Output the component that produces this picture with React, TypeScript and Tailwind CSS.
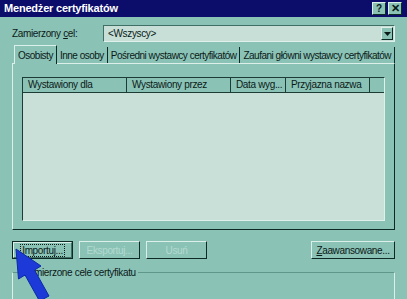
export default function App() {
  const font = { fontFamily: '"Liberation Sans", Arial, sans-serif' };
  const raised = "border border-t-[#dcefe9] border-l-[#dcefe9] border-r-[#0d2a24] border-b-[#0d2a24]";
  return (
    <div
      className="relative w-[407px] h-[299px] overflow-hidden bg-[#8ac2b6] text-[10px] tracking-[-0.35px] text-[#0a1a16] whitespace-nowrap"
      style={font}
    >
      {/* title bar */}
      <div className="flex h-[17px] items-center justify-between bg-[#0c0c6a] pl-[4px] pr-[5px]">
        <span className="font-bold text-[11px] text-white tracking-[-0.2px]">Menedżer certyfikatów</span>
        <div className="flex gap-[2px]">
          <div className={`flex h-[13px] w-[14px] items-center justify-center bg-[#8ac2b6] text-[10px] font-bold leading-none ${raised}`}>
            ?
          </div>
          <div className={`flex h-[13px] w-[14px] items-center justify-center bg-[#8ac2b6] text-[11px] font-bold leading-none ${raised}`}>
            ✕
          </div>
        </div>
      </div>

      <div className="px-[12px] pt-[8px]">
        {/* target row */}
        <div className="flex items-center">
          <span className="w-[91px]">
            Zamierzony <span className="underline">c</span>el:
          </span>
          <div className="flex h-[17px] flex-1 items-center border border-t-[#3f6f65] border-l-[#3f6f65] border-r-[#e0f0ea] border-b-[#e0f0ea] bg-[#c8dfd8] pl-[4px] pr-[1px]">
            <span className="flex-1">&lt;Wszyscy&gt;</span>
            <div className={`flex h-[13px] w-[12px] items-center justify-center bg-[#8ac2b6] ${raised}`}>
              <svg width="7" height="4" viewBox="0 0 7 4">
                <path d="M0 0h7L3.5 4z" fill="#0a1a16" />
              </svg>
            </div>
          </div>
        </div>

        {/* tabs */}
        <div className="mt-[5px] flex h-[16px] items-end pl-[2px] tracking-[-0.5px]">
          <div className="relative z-10 -mb-px flex h-[19px] items-center border border-b-0 border-t-[#dcefe9] border-l-[#dcefe9] border-r-[#0d2a24] bg-[#8ac2b6] px-[3px]">
            Osobisty
          </div>
          <div className="flex h-[16px] items-center border-r border-[#0d2a24] px-[3px]">Inne osoby</div>
          <div className="flex h-[16px] items-center border-r border-[#0d2a24] px-[3px]">Pośredni wystawcy certyfikatów</div>
          <div className="flex h-[16px] items-center border-r border-[#0d2a24] px-[3px]">Zaufani główni wystawcy certyfikatów</div>
        </div>

        {/* tab panel */}
        <div className={`h-[167px] px-[9px] pt-[13px] ${raised}`}>
          <div className="h-[144px] border border-t-[#1d3c35] border-l-[#1d3c35] border-r-[#e0f0ea] border-b-[#e0f0ea] bg-[#c9e0d9]">
            <div className="flex h-[15px] border-b border-[#1d3c35] bg-[#8ac2b6] leading-[14px]">
              <div className="w-[104px] overflow-hidden border-r border-[#1d3c35] pl-[5px]">Wystawiony dla</div>
              <div className="w-[104px] overflow-hidden border-r border-[#1d3c35] pl-[5px]">Wystawiony przez</div>
              <div className="w-[55px] overflow-hidden border-r border-[#1d3c35] pl-[5px]">Data wyg...</div>
              <div className="w-[84px] overflow-hidden border-r border-[#1d3c35] pl-[5px]">Przyjazna nazwa</div>
              <div className="flex-1" />
            </div>
          </div>
        </div>

        {/* buttons */}
        <div className="mt-[11px] flex h-[18px] items-stretch gap-[6px]">
          <div className="flex w-[61px] border border-[#0d2a24]">
            <div className="flex flex-1 items-center justify-center border border-t-[#dcefe9] border-l-[#dcefe9] border-r-[#3f6f65] border-b-[#3f6f65]">
              <span className="border border-dotted border-[#0a1a16] px-[1px] leading-[11px]">
                <span className="underline">I</span>mportuj...
              </span>
            </div>
          </div>
          <div className={`flex w-[61px] items-center justify-center text-[#b4dad0] ${raised}`}>Eksportuj...</div>
          <div className={`flex w-[61px] items-center justify-center text-[#b4dad0] ${raised}`}>Usuń</div>
          <div className="flex-1" />
          <div className={`flex w-[84px] items-center justify-center ${raised}`}>
            <span className="underline">Z</span>aawansowane...
          </div>
        </div>

        {/* group box */}
        <div className="relative mt-[13px] h-[40px] border border-[#dcefe9] border-t-[#5f978b]">
          <span className="absolute -top-[8px] left-[8px] bg-[#8ac2b6] px-[2px]">Zamierzone cele certyfikatu</span>
        </div>
      </div>

      {/* blue arrow */}
      <svg className="absolute left-0 top-[240px]" width="60" height="60" viewBox="0 240 60 60">
        <path
          d="M16 249 L41 266 L34.5 270 L49 296 L39.5 301 L25 275 L18.5 279 Z"
          fill="#1d3ad8"
          stroke="#0b2aa8"
          strokeWidth="1"
        />
      </svg>
    </div>
  );
}
